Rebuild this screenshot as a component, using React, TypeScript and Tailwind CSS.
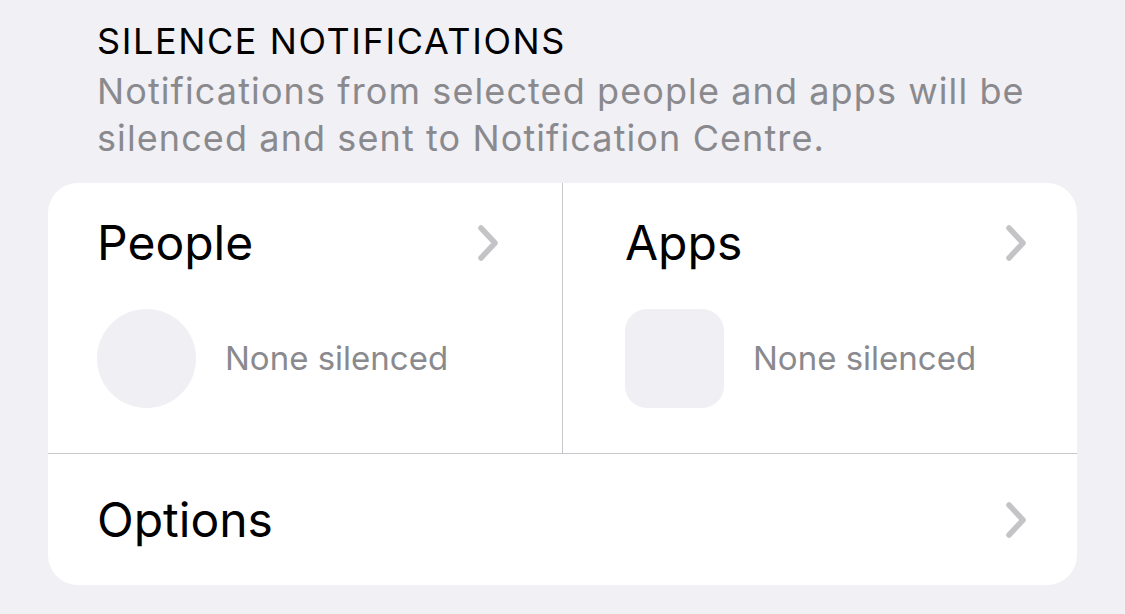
import { ReactNode } from 'react';

function Chevron() {
  return (
    <svg width="24" height="38" viewBox="0 0 24 38" fill="none" className="shrink-0">
      <path
        d="M5 4 L19 19 L5 34"
        stroke="#c4c4c7"
        strokeWidth="5.5"
        strokeLinecap="round"
        strokeLinejoin="round"
      />
    </svg>
  );
}

interface PickerCellProps {
  title: string;
  placeholder: ReactNode;
  className?: string;
}

function PickerCell({ title, placeholder, className = '' }: PickerCellProps) {
  return (
    <div className={`flex flex-col pt-[32px] pl-[49px] ${className}`}>
      <div className="flex items-center justify-between h-[56px]">
        <span className="text-[48px] leading-none text-black">{title}</span>
        <Chevron />
      </div>
      <div className="flex items-center gap-[29px] mt-[38px]">
        {placeholder}
        <span className="text-[33px] text-[#8a8a8e]">None silenced</span>
      </div>
    </div>
  );
}

export default function App() {
  return (
    <div
      className="w-[1125px] h-[614px] bg-[#f1f0f5] overflow-hidden"
      style={{ fontFamily: 'Inter, "Noto Sans", sans-serif' }}
    >
      <div className="px-[97px] pt-[21px]">
        <h2 className="text-[36px] leading-[40px] tracking-[1.6px] text-black">SILENCE NOTIFICATIONS</h2>
        <p className="text-[36px] leading-[47px] tracking-[1.1px] text-[#8a8a8e] mt-[7px]">
          Notifications from selected people and apps will be silenced and sent to Notification Centre.
        </p>
      </div>

      <div className="mx-[48px] mt-[21px] bg-white rounded-[30px] overflow-hidden">
        <div className="grid grid-cols-[515px_1fr] h-[271px] border-b border-[#c8c8cc]">
          <PickerCell
            title="People"
            className="border-r border-[#c8c8cc] pr-[62px]"
            placeholder={<div className="w-[99px] h-[99px] rounded-full bg-[#efeff4]" />}
          />
          <PickerCell
            title="Apps"
            className="pl-[62px] pr-[49px]"
            placeholder={<div className="w-[99px] h-[99px] rounded-[22px] bg-[#efeff4]" />}
          />
        </div>
        <div className="flex items-center justify-between h-[131px] pl-[49px] pr-[49px]">
          <span className="text-[48px] leading-none text-black">Options</span>
          <Chevron />
        </div>
      </div>
    </div>
  );
}
